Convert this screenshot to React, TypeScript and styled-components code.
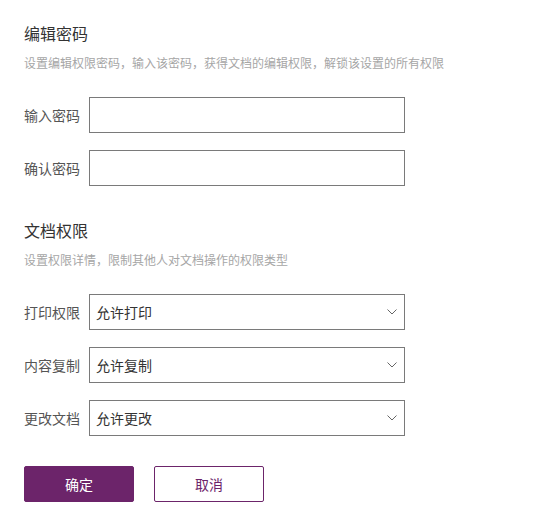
import styled, { createGlobalStyle } from 'styled-components';

const GlobalStyle = createGlobalStyle`
  body {
    margin: 0;
    background: #fff;
    font-family: "Noto Sans CJK SC", "Liberation Sans", sans-serif;
  }
`;

const Page = styled.div`
  padding: 20px 24px;
  display: flex;
  flex-direction: column;
`;

const Section = styled.section<{ $space: number }>`
  display: flex;
  flex-direction: column;
  margin-bottom: ${(p) => p.$space}px;
`;

const Title = styled.h2`
  margin: 0;
  font-size: 16px;
  font-weight: 400;
  line-height: 26px;
  color: #333;
`;

const Desc = styled.p`
  margin: 8px 0 25px;
  font-size: 12px;
  line-height: 18px;
  color: #a6a6a6;
`;

const Rows = styled.div`
  display: flex;
  flex-direction: column;
  gap: 17px;
`;

const Row = styled.label`
  display: flex;
  align-items: center;
`;

const Label = styled.span`
  width: 65px;
  flex: none;
  font-size: 14px;
  color: #555;
`;

const Field = styled.div`
  position: relative;
  width: 316px;
  height: 36px;
  box-sizing: border-box;
  border: 1px solid #7a7a7a;
  display: flex;
  align-items: center;
  padding: 0 6px;
  font-size: 14px;
  color: #333;
`;

const Input = styled.input`
  border: none;
  outline: none;
  width: 100%;
  height: 100%;
  font: inherit;
  background: transparent;
`;

const Chevron = styled.svg`
  position: absolute;
  right: 6px;
  top: 13px;
`;

const Buttons = styled.div`
  display: flex;
  gap: 20px;
`;

const Button = styled.button<{ $primary?: boolean }>`
  width: 110px;
  height: 36px;
  border-radius: 2px;
  border: 1px solid #6c246a;
  background: ${(p) => (p.$primary ? '#6c246a' : '#fff')};
  color: ${(p) => (p.$primary ? '#fff' : '#6c246a')};
  font-family: inherit;
  font-size: 14px;
  cursor: pointer;
`;

const Select = ({ value }: { value: string }) => (
  <Field>
    {value}
    <Chevron width="12" height="8" viewBox="0 0 12 8">
      <path d="M1.5 1.5 L6 6 L10.5 1.5" fill="none" stroke="#666" strokeWidth="1" />
    </Chevron>
  </Field>
);

export default function App() {
  return (
    <>
      <GlobalStyle />
      <Page>
        <Section $space={31}>
          <Title>编辑密码</Title>
          <Desc>设置编辑权限密码，输入该密码，获得文档的编辑权限，解锁该设置的所有权限</Desc>
          <Rows>
            <Row>
              <Label>输入密码</Label>
              <Field>
                <Input type="password" />
              </Field>
            </Row>
            <Row>
              <Label>确认密码</Label>
              <Field>
                <Input type="password" />
              </Field>
            </Row>
          </Rows>
        </Section>
        <Section $space={30}>
          <Title>文档权限</Title>
          <Desc>设置权限详情，限制其他人对文档操作的权限类型</Desc>
          <Rows>
            <Row>
              <Label>打印权限</Label>
              <Select value="允许打印" />
            </Row>
            <Row>
              <Label>内容复制</Label>
              <Select value="允许复制" />
            </Row>
            <Row>
              <Label>更改文档</Label>
              <Select value="允许更改" />
            </Row>
          </Rows>
        </Section>
        <Buttons>
          <Button $primary>确定</Button>
          <Button>取消</Button>
        </Buttons>
      </Page>
    </>
  );
}
